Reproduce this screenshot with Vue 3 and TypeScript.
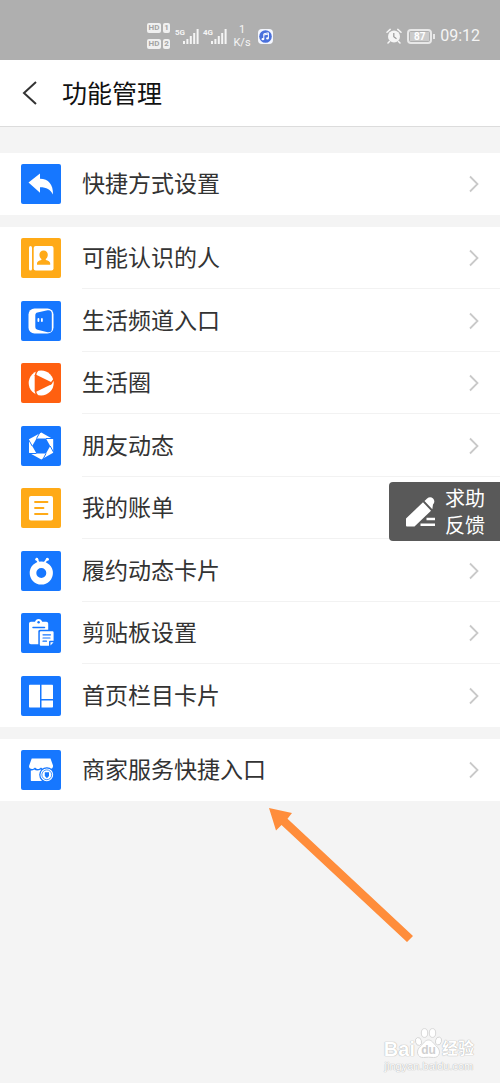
<script setup lang="ts">
type IconName =
  | 'reply' | 'contacts' | 'channel' | 'circle' | 'friends'
  | 'bill' | 'promise' | 'clipboard' | 'columns' | 'shop'

interface Entry {
  label: string
  icon: IconName
  tone: 'blue' | 'amber' | 'orange'
}

const groups: Entry[][] = [
  [{ label: '快捷方式设置', icon: 'reply', tone: 'blue' }],
  [
    { label: '可能认识的人', icon: 'contacts', tone: 'amber' },
    { label: '生活频道入口', icon: 'channel', tone: 'blue' },
    { label: '生活圈', icon: 'circle', tone: 'orange' },
    { label: '朋友动态', icon: 'friends', tone: 'blue' },
    { label: '我的账单', icon: 'bill', tone: 'amber' },
    { label: '履约动态卡片', icon: 'promise', tone: 'blue' },
    { label: '剪贴板设置', icon: 'clipboard', tone: 'blue' },
    { label: '首页栏目卡片', icon: 'columns', tone: 'blue' },
  ],
  [{ label: '商家服务快捷入口', icon: 'shop', tone: 'blue' }],
]
</script>

<template>
  <div class="page">
    <div class="status">
      <div class="status-left">
        <div class="hd-stack">
          <div v-for="n in 2" :key="n" class="hd"><span class="hd-tag">HD</span><span class="hd-sim">{{ n }}</span></div>
        </div>
        <div v-for="net in ['5G', '4G']" :key="net" class="net">
          <span class="net-name">{{ net }}</span>
          <svg class="bars" viewBox="0 0 16 15" aria-hidden="true">
            <path d="M0 12h2v3H0zM3.4 10h2v5h-2zM6.8 7h2v8h-2zM10.2 4h2v11h-2zM13.6 0h2v15h-2z" />
          </svg>
        </div>
        <div class="speed"><span>1</span><span>K/s</span></div>
        <svg class="music" viewBox="0 0 15 15" aria-hidden="true">
          <rect width="15" height="15" rx="4" fill="#f4f7ff" />
          <circle cx="7.500" cy="7.500" r="6.300" fill="#4a70dc" />
          <path d="M5.800 10V4.800l4.600-1V9.200M5.800 6l4.600-1" fill="none" stroke="#fff" stroke-width="1" />
          <ellipse cx="4.900" cy="10.200" rx="1.400" ry="1.100" fill="#fff" />
          <ellipse cx="9.500" cy="9.400" rx="1.400" ry="1.100" fill="#fff" />
        </svg>
      </div>
      <div class="status-right">
        <svg class="alarm" viewBox="0 0 16 16" aria-hidden="true">
          <circle cx="8" cy="8.500" r="6" fill="#f5f5f5" />
          <path d="M1 4.300l3.200-2.900M15 4.300l-3.200-2.900M3.500 13.500L2 15M12.500 13.500L14 15" stroke="#f5f5f5" stroke-width="1.500" stroke-linecap="round" />
          <path d="M7.800 5v3.800l2.700 1.900" fill="none" stroke="#999" stroke-width="1.200" />
        </svg>
        <span class="battery"><span class="charge">87</span></span>
        <span class="clock">09:12</span>
      </div>
    </div>

    <header class="header">
      <button class="back" type="button" aria-label="返回">
        <svg viewBox="0 0 16 26" aria-hidden="true">
          <path d="M14 2L2 13l12 11" fill="none" stroke="#333" stroke-width="2" />
        </svg>
      </button>
      <h1>功能管理</h1>
    </header>

    <main>
      <ul v-for="(group, g) in groups" :key="g" class="group">
        <li v-for="item in group" :key="item.label">
          <a class="row" href="#">
            <span class="tile" :class="item.tone">
              <svg viewBox="0 0 40 40" aria-hidden="true">
                <path v-if="item.icon === 'reply'" fill="#fff" d="M7.500 18.500L19 9.500v5.300c8.500 0 13.300 5.800 13 15.700-2.800-5-6.200-7.200-13-7.200v5.400z" />
                <g v-else-if="item.icon === 'contacts'">
                  <rect x="8" y="8" width="3" height="24.500" rx="1.500" fill="#fff" />
                  <rect x="12.700" y="8" width="19.800" height="24.500" rx="2" fill="#fff" />
                  <path fill="#ffaa17" d="M22.600 12.500c2.500 0 4.200 1.900 4.200 4.300 0 1.800-.8 3.300-2 4.200v1c2.500.6 4.400 1.700 4.400 3.200v1.600H16v-1.600c0-1.500 1.900-2.600 4.400-3.200v-1c-1.200-.9-2-2.400-2-4.200 0-2.400 1.700-4.300 4.200-4.300z" />
                </g>
                <g v-else-if="item.icon === 'channel'">
                  <rect x="7.500" y="7.500" width="25" height="25" rx="6" fill="#fff" />
                  <path fill="#1677ff" d="M16.500 11.500l10-2.200c2.800-.5 4.300.7 4.300 3.300v15.500c0 2.600-1.500 3.700-4.200 3.100l-10-2.400c-1.600-.4-2.300-1.400-2.300-3V14.500c0-1.700.7-2.700 2.200-3z" />
                  <rect x="16.500" y="17" width="1.800" height="4" rx=".9" fill="#fff" />
                  <rect x="20" y="17" width="1.800" height="4" rx=".9" fill="#fff" />
                </g>
                <g v-else-if="item.icon === 'circle'">
                  <circle cx="20.200" cy="20" r="12.500" fill="#fff" />
                  <path fill="#ff6010" d="M15.200 11.700c-.9-.4-1.500 0-1.500 1v15c0 1 .6 1.400 1.500 1l15.300-7.500c1-.6 1-1.400 0-2z" />
                  <path fill="none" stroke="#ff6010" stroke-width="1.500" d="M14.300 13c.2-2.300 1-4.300 2.600-6M14.300 27.500c.2 2.200 1 4 2.400 5.500M30 20.200l3.200-4" />
                </g>
                <g v-else-if="item.icon === 'friends'">
                  <path fill="#fff" d="M20.300 6.500l11.900 6.700v13.500l-11.900 6.800L8 26.800V13.300z" />
                  <path fill="#1677ff" d="M15.500 12.500H25L29.200 20 25 27.500h-9.500L11.200 20z" />
                  <path fill="none" stroke="#1677ff" stroke-width="1" d="M25 12.500h7.500M29.200 20l3.500 6.500M25 27.500L21.500 34M15.500 27.500H8M11.200 20l-3.800-6.700M15.500 12.500L19 6.300" />
                </g>
                <g v-else-if="item.icon === 'bill'">
                  <rect x="8" y="8" width="24" height="24.500" rx="2" fill="#fff" />
                  <path stroke="#ffaa17" stroke-width="1.800" stroke-linecap="round" d="M14 14h12.500M14 20h8.500M14 26h12.500" />
                </g>
                <g v-else-if="item.icon === 'promise'">
                  <circle cx="20.300" cy="22" r="8.300" fill="none" stroke="#fff" stroke-width="6.600" />
                  <path fill="none" stroke="#fff" stroke-width="1.800" stroke-linecap="round" d="M17.800 12l-2-4.200M23.200 12l3-4" />
                  <circle cx="15.800" cy="8.200" r="1.500" fill="#fff" />
                  <circle cx="26.400" cy="8.200" r="1.500" fill="#fff" />
                </g>
                <g v-else-if="item.icon === 'clipboard'">
                  <path fill="#fff" d="M10 8.800h4c.5-1.700 1.800-2.800 3.600-2.800s3.100 1.100 3.600 2.800h4c1.200 0 2 .8 2 2v6H19c-1 0-1.700.7-1.700 1.700v12.800H10c-1.200 0-2-.8-2-2V10.800c0-1.200.8-2 2-2z" />
                  <path stroke="#1677ff" stroke-width="1.500" stroke-linecap="round" d="M12 14.500h11.500" />
                  <circle cx="17.600" cy="9.200" r="1.200" fill="#1677ff" />
                  <path fill="#fff" d="M20.200 18.200h11c.9 0 1.400.5 1.400 1.400v8.100h-3.200c-.9 0-1.400.5-1.400 1.400v3.700h-7.800c-.9 0-1.400-.5-1.400-1.400V19.600c0-.9.500-1.400 1.400-1.400zM29.500 29.200h3.100l-3.100 3.300z" />
                  <path fill="none" stroke="#1677ff" stroke-width="1.200" stroke-linecap="round" d="M22 21.800h7.500M22 25h7M22 28.200h3.500" />
                </g>
                <path v-else-if="item.icon === 'columns'" fill="#fff" d="M9 8.800h10v22.700H9c-.6 0-1-.4-1-1V9.800c0-.6.4-1 1-1zM20.500 8.800H31c.6 0 1 .4 1 1V23H20.500zM20.500 24.500H32v6c0 .6-.4 1-1 1H20.500z" />
                <g v-else>
                  <path fill="#fff" d="M10.700 8.500h18.800l2.500 7c.3 2.200-1 3.500-3 3.500-1.500 0-2.400-.6-3-1.500-.7 1-1.700 1.500-3 1.500s-2.300-.6-3-1.500c-.7.9-1.700 1.500-3 1.500s-2.300-.6-3-1.500c-.7.9-1.600 1.500-2.900 1.500-2.200 0-3.500-1.500-2.900-3.500z" />
                  <path fill="#fff" d="M9.800 20.500c1.500 0 2.500-.3 3.300-1 2 1.300 4.300 1.300 6.700 0 2 1.300 4 1.300 6 0l3.500 1V31H10.800c-.7 0-1-.4-1-1z" />
                  <circle cx="25.800" cy="24.800" r="7.600" fill="#1677ff" />
                  <circle cx="25.800" cy="24.800" r="5.700" fill="#fff" stroke="#fff" stroke-width="1.400" />
                  <circle cx="25.800" cy="24.800" r="4.900" fill="none" stroke="#1677ff" stroke-width=".8" />
                  <path fill="#1677ff" d="M23.800 22.300h4.200v3.700l-2.100 2.300-2.100-2.300z" />
                </g>
              </svg>
            </span>
            <span class="label">{{ item.label }}</span>
            <svg class="chevron" viewBox="0 0 10 18" aria-hidden="true">
              <path d="M1 1.500L8.500 9 1 16.500" fill="none" stroke="#c9c9c9" stroke-width="1.800" />
            </svg>
          </a>
        </li>
      </ul>
    </main>

    <svg class="pointer" viewBox="0 0 144 134" aria-hidden="true">
      <path fill="#ff8d3b" d="M0 0l23 5-4.500 5.800L144 128l-6 6L12.500 17 7 22.500z" />
    </svg>

    <button class="feedback" type="button">
      <svg viewBox="0 0 32 32" aria-hidden="true">
        <path fill="#fff" d="M1 22.500L18 6.300l8 8.400L9.500 30.500H2.300c-.9 0-1.300-.4-1.300-1.300zM19.500 5l2.600-2.500c1.900-1.700 4.300-1.700 6 .1s1.700 4.200-.1 6L27.300 13.300z" />
        <path stroke="#fff" stroke-width="2.600" d="M21.500 23H30M15.500 28.800H30" />
      </svg>
      <span>求助<br>反馈</span>
    </button>

    <footer class="mark">
      <div class="brand">
        <span class="bai">Bai</span>
        <span class="paw">
          <svg viewBox="0 0 27 31" aria-hidden="true">
            <g fill="#fff" stroke="#d4d4d4" stroke-width=".9">
              <ellipse cx="3.500" cy="13.500" rx="3" ry="4" transform="rotate(-15 3.500 13.500)" />
              <ellipse cx="9.500" cy="5" rx="3.200" ry="4.400" />
              <ellipse cx="17.500" cy="5" rx="3.200" ry="4.400" />
              <ellipse cx="23.500" cy="13" rx="3" ry="4" transform="rotate(15 23.500 13)" />
              <path d="M13.500 12c3.500 0 4.500 3 7.800 6 5.700 4.800 3.200 12-2.800 11.500-3.500-.4-6.500-.4-10 0-6 .5-8.500-6.700-2.800-11.500 3.300-3 4.300-6 7.800-6z" />
            </g>
          </svg>
          <span class="du">du</span>
        </span>
        <span class="jy">经验</span>
      </div>
      <div class="site">jingyan.baidu.com</div>
    </footer>
  </div>
</template>

<style>
body {
  margin: 0;
  background: #f4f4f4;
}
</style>

<style scoped>
.page {
  position: relative;
  display: flex;
  flex-direction: column;
  box-sizing: border-box;
  min-height: 100vh;
  overflow: hidden;
  background: #f4f4f4;
  color: #333;
  font-family: "Liberation Sans", "Noto Sans CJK SC", sans-serif;
}

.status {
  display: flex;
  justify-content: space-between;
  align-items: center;
  box-sizing: border-box;
  height: 60px;
  padding: 12px 20px 0 147px;
  background: #afafaf;
  color: #f5f5f5;
  font-family: Roboto, sans-serif;
}

.status-left,
.status-right {
  display: flex;
  align-items: center;
}

.hd-stack {
  display: flex;
  flex-direction: column;
  gap: 6px;
  margin-right: 5px;
}

.hd {
  display: flex;
  gap: 2px;
  font-size: 8px;
  font-weight: 700;
  line-height: 10px;
}

.hd-tag,
.hd-sim {
  border-radius: 2px;
  background: #f0f0f0;
  color: #a3a3a3;
  text-align: center;
}

.hd-tag {
  width: 14px;
}

.hd-sim {
  width: 7px;
}

.net {
  display: flex;
  align-items: flex-start;
  width: 28px;
}

.net-name {
  width: 8px;
  font-size: 8px;
  font-weight: 700;
  line-height: 8px;
}

.bars {
  width: 16px;
  height: 15px;
  fill: #f5f5f5;
}

.speed {
  display: flex;
  flex-direction: column;
  align-items: center;
  width: 22px;
  margin-right: 5px;
  font-size: 11px;
  line-height: 13px;
}

.music {
  width: 15px;
  height: 15px;
}

.alarm {
  width: 16px;
  height: 16px;
  margin-right: 5px;
}

.battery {
  position: relative;
  box-sizing: border-box;
  width: 25px;
  height: 15px;
  margin-right: 8px;
  padding: 1px;
  border: 2px solid #e8e8e8;
  border-radius: 4px;
}

.battery::after {
  content: "";
  position: absolute;
  top: 3px;
  right: -5px;
  width: 2px;
  height: 5px;
  background: #e8e8e8;
}

.charge {
  display: block;
  background: #cbcbcb;
  color: #fff;
  font-size: 10px;
  font-weight: 700;
  line-height: 9px;
  text-align: center;
}

.clock {
  font-size: 16px;
  line-height: 20px;
}

.header {
  display: flex;
  align-items: center;
  height: 66px;
  padding-left: 22px;
  border-bottom: 1px solid #dcdcdc;
  background: #fff;
}

.back {
  width: 16px;
  height: 26px;
  margin-right: 24px;
  padding: 0;
  border: 0;
  background: none;
}

.back svg,
.tile svg {
  display: block;
  width: 100%;
  height: 100%;
}

h1 {
  margin: 0;
  padding-top: 2px;
  color: #111;
  font-size: 25px;
  font-weight: 400;
  line-height: 36px;
}

main {
  display: flex;
  flex-direction: column;
  gap: 12px;
  padding-top: 26px;
}

.group {
  margin: 0;
  padding: 0;
  background: #fff;
  list-style: none;
}

.row {
  position: relative;
  display: flex;
  align-items: center;
  height: 62px;
  padding: 0 21px;
  color: inherit;
  text-decoration: none;
}

li:nth-child(even) .row {
  height: 63px;
}

li:not(:last-child) .row::after {
  content: "";
  position: absolute;
  right: 0;
  bottom: 0;
  left: 82px;
  height: 1px;
  background: #f2f2f2;
}

.tile {
  width: 40px;
  height: 40px;
  margin-right: 21px;
  border-radius: 2px;
}

.blue {
  background: #1677ff;
}

.amber {
  background: #ffaa17;
}

.orange {
  background: #ff6010;
}

.label {
  flex: 1;
  font-size: 23px;
  line-height: 32px;
}

.chevron {
  width: 10px;
  height: 18px;
}

.pointer {
  position: absolute;
  top: 808px;
  left: 269px;
  width: 144px;
  height: 134px;
}

.feedback {
  position: absolute;
  top: 482px;
  right: 0;
  display: flex;
  align-items: center;
  gap: 8px;
  height: 59px;
  padding: 0 15px 0 16px;
  border: 0;
  border-radius: 4px 0 0 4px;
  background: #595959;
  color: #fff;
  font-family: inherit;
  font-size: 20px;
  line-height: 27px;
}

.feedback svg {
  width: 32px;
  height: 32px;
}

.feedback span {
  padding-top: 3px;
}

.mark {
  align-self: flex-end;
  margin-top: auto;
  padding: 0 26px 10px 0;
  color: #fff;
  text-shadow: 0 0 1px #aaa, 0 0 1px #bbb;
}

.brand {
  display: flex;
  align-items: flex-end;
  justify-content: center;
}

.bai {
  font-size: 20px;
  font-weight: 700;
  line-height: 20px;
}

.paw {
  position: relative;
  width: 27px;
  height: 31px;
}

.paw svg {
  width: 27px;
  height: 31px;
}

.du {
  position: absolute;
  right: 0;
  bottom: 2px;
  left: 0;
  color: #cfcfcf;
  font-size: 12px;
  font-weight: 700;
  line-height: 14px;
  text-align: center;
  text-shadow: none;
}

.jy {
  font-size: 16px;
  font-weight: 700;
  line-height: 20px;
}

.site {
  font-size: 11px;
  line-height: 14px;
  text-align: center;
}
</style>
